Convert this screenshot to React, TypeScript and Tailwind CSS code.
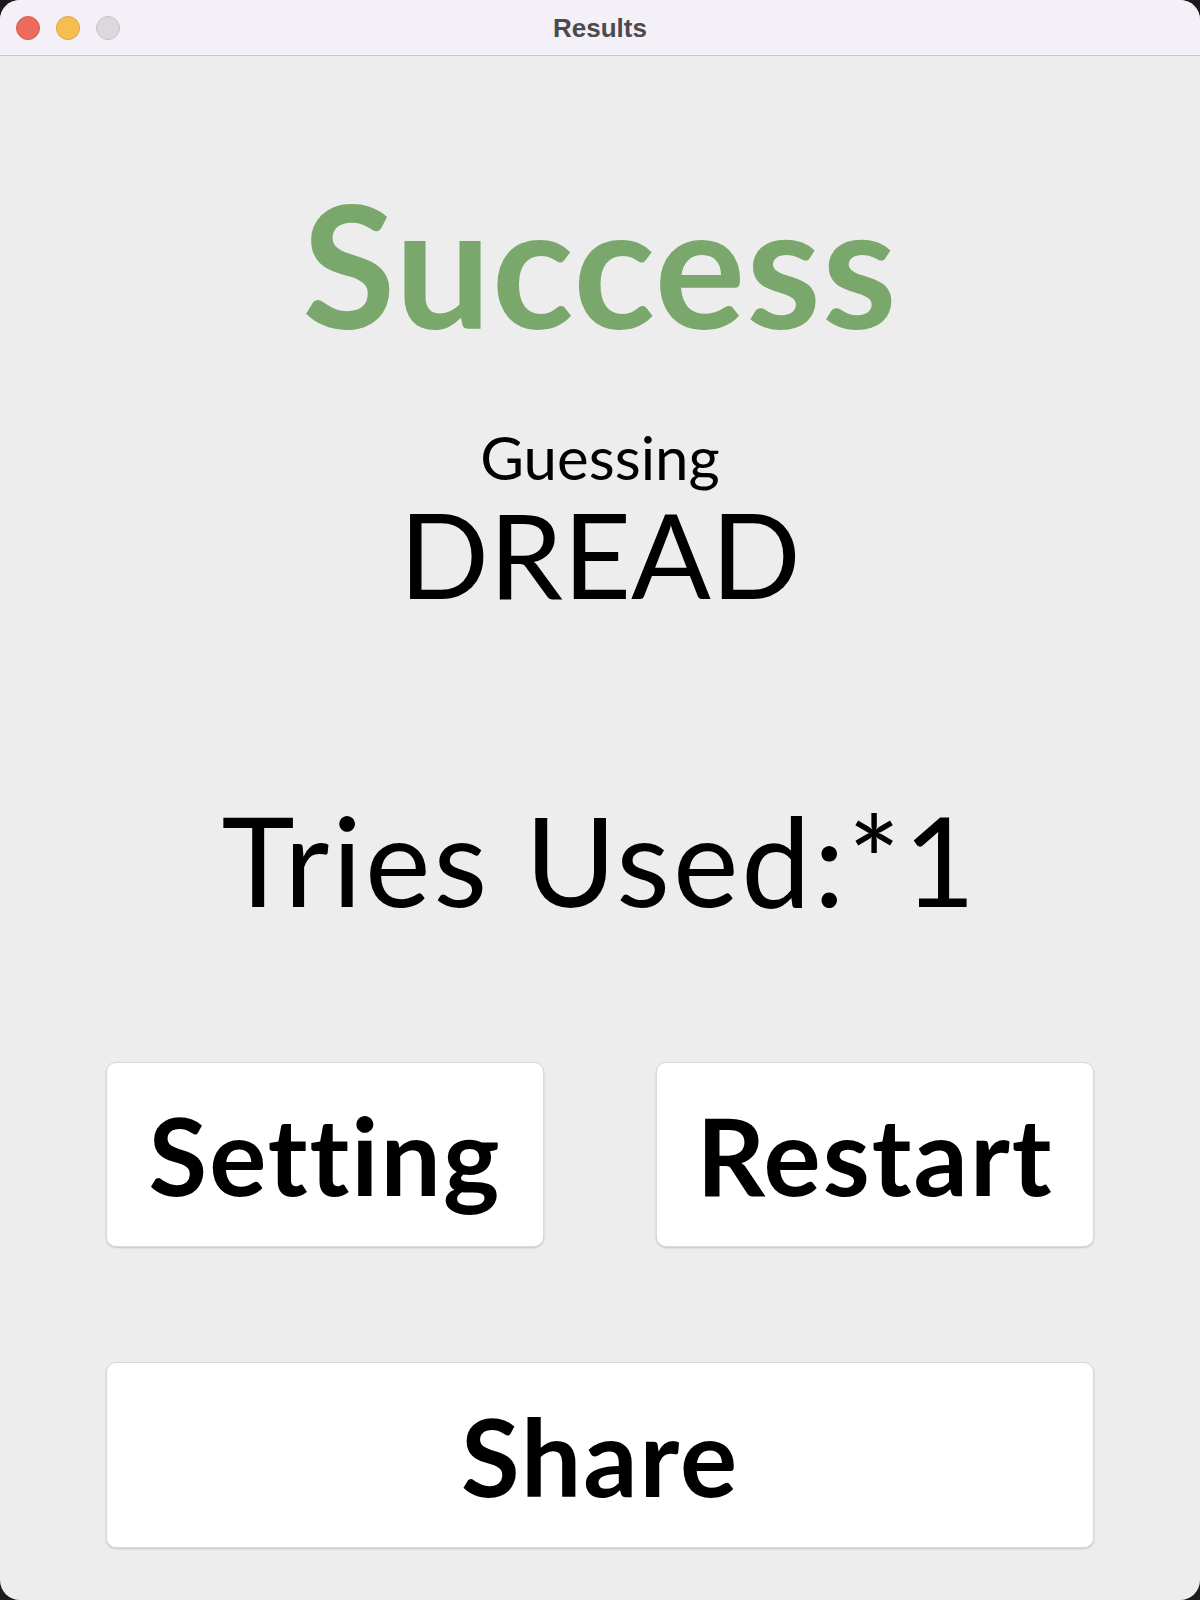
import React from "react";

const comic = { fontFamily: "Lato, 'Open Sans', sans-serif" };

function ActionButton({ label, wide }: { label: string; wide?: boolean }) {
  return (
    <button
      className={`flex items-center justify-center rounded-[10px] bg-white border border-[#dadada] shadow-[0_1px_2px_rgba(0,0,0,0.18)] ${
        wide ? "w-[988px] h-[186px]" : "w-[438px] h-[185px]"
      }`}
    >
      <span className="text-[107px] leading-none font-bold tracking-[2px] text-black" style={comic}>
        {label}
      </span>
    </button>
  );
}

export default function App() {
  return (
    <div className="w-[1200px] h-[1600px] bg-[#1c1a1f]">
      <div className="w-full h-full rounded-[20px] overflow-hidden bg-[#ededed] flex flex-col">
        {/* Title bar */}
        <div className="relative h-[56px] shrink-0 bg-[#f3f0f7] border-b border-[#c9c7cc] flex items-center justify-center">
          <div className="absolute left-[16px] top-[16px] flex gap-[16px]">
            <span className="w-[24px] h-[24px] rounded-full bg-[#ec6a5e] border border-[#d35a4f]" />
            <span className="w-[24px] h-[24px] rounded-full bg-[#f5bf4f] border border-[#d9a63f]" />
            <span className="w-[24px] h-[24px] rounded-full bg-[#dcd8de] border border-[#c5c1c8]" />
          </div>
          <span
            className="text-[26px] font-bold text-[#4b4a4f] leading-none"
            style={{ fontFamily: "'Liberation Sans', Arial, sans-serif" }}
          >
            Results
          </span>
        </div>

        {/* Content */}
        <div className="flex flex-col items-center">
          <div
            className="mt-[122px] text-[170px] leading-none font-bold tracking-[1px] text-[#7aa86c]"
            style={comic}
          >
            Success
          </div>
          <div className="mt-[79px] text-[60px] leading-none text-black" style={comic}>
            Guessing
          </div>
          <div
            className="mt-[8px] text-[118px] leading-none text-black"
            style={{ fontFamily: "Lato, sans-serif" }}
          >
            DREAD
          </div>
          <div
            className="mt-[184px] text-[124px] leading-none tracking-[3px] text-black"
            style={comic}
          >
            Tries Used:*1
          </div>

          <div className="mt-[141px] flex gap-[112px]">
            <ActionButton label="Setting" />
            <ActionButton label="Restart" />
          </div>
          <div className="mt-[115px]">
            <ActionButton label="Share" wide />
          </div>
        </div>
      </div>
    </div>
  );
}
